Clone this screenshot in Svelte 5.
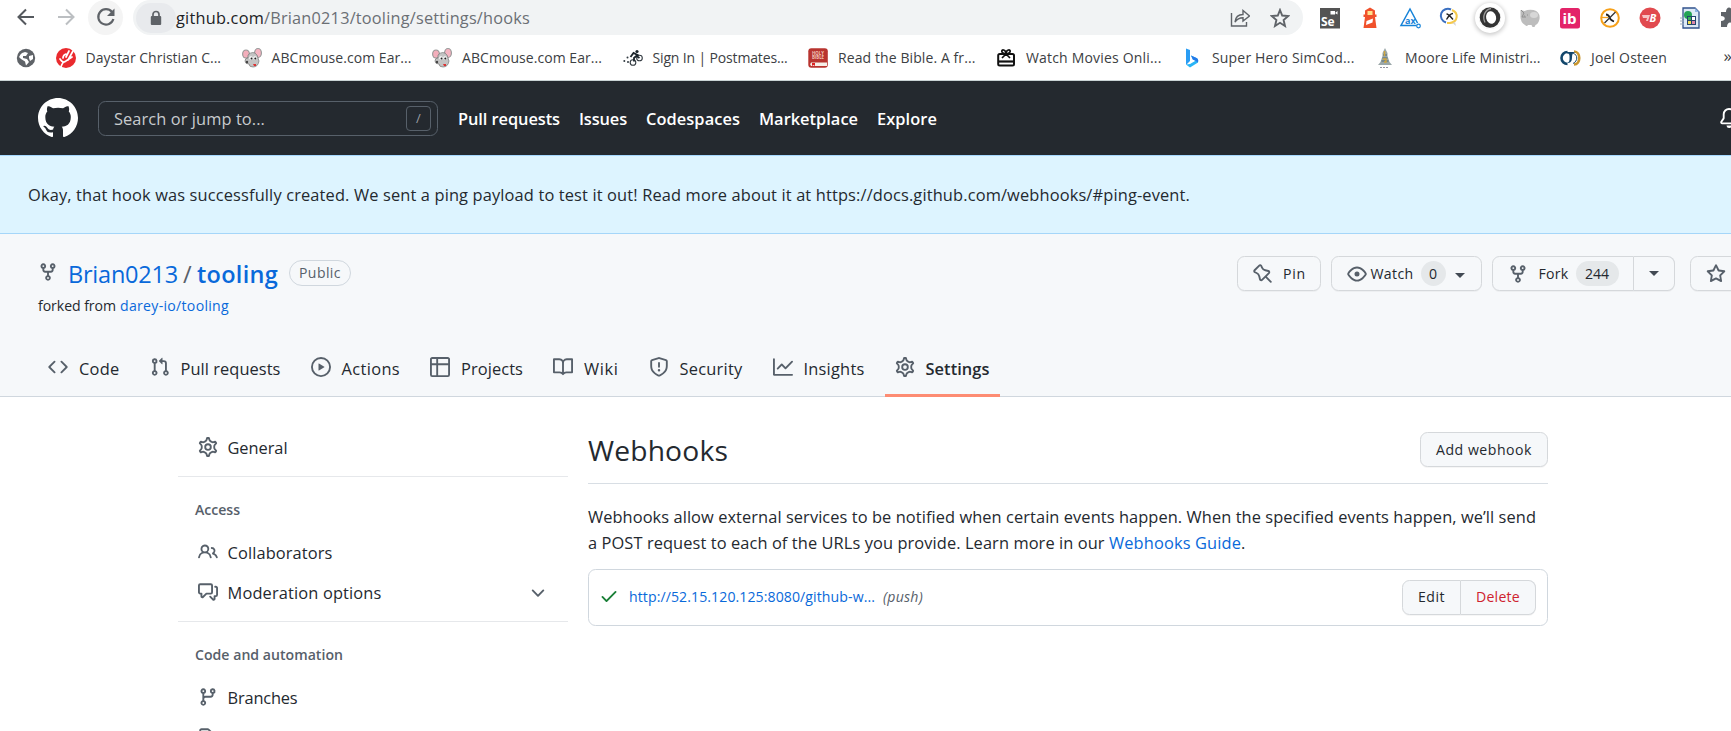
<script>
  // Spreads a label over its advance width through letter-spacing.
  function fit(node, width) {
    if (!width) return;
    const natural = node.getBoundingClientRect().width;
    node.style.letterSpacing = (width - natural) / node.textContent.length + 'px';
  }

  const icons = {
    mark: 'M8 0C3.58 0 0 3.58 0 8c0 3.54 2.29 6.53 5.47 7.59.4.07.55-.17.55-.38 0-.19-.01-.82-.01-1.49-2.01.37-2.53-.49-2.69-.94-.09-.23-.48-.94-.82-1.13-.28-.15-.68-.52-.01-.53.63-.01 1.08.58 1.23.82.72 1.21 1.87.87 2.33.66.07-.52.28-.87.51-1.07-1.78-.2-3.64-.89-3.64-3.95 0-.87.31-1.59.82-2.15-.08-.2-.36-1.02.08-2.12 0 0 .67-.21 2.2.82.64-.18 1.32-.27 2-.27.68 0 1.36.09 2 .27 1.53-1.04 2.2-.82 2.2-.82.44 1.1.16 1.92.08 2.12.51.56.82 1.27.82 2.15 0 3.07-1.87 3.75-3.65 3.95.29.25.54.73.54 1.48 0 1.07-.01 1.93-.01 2.2 0 .21.15.46.55.38A8.013 8.013 0 0016 8c0-4.42-3.58-8-8-8z',
    bell: 'M8 16a2 2 0 001.985-1.75c.017-.137-.097-.25-.235-.25h-3.5c-.138 0-.252.113-.235.25A2 2 0 008 16zM8 1.5A3.5 3.5 0 004.5 5v2.947c0 .346-.102.683-.294.97l-1.703 2.556a.018.018 0 00-.003.01l.001.006c0 .002.002.004.004.006a.017.017 0 00.006.004l.007.001h10.964l.007-.001a.016.016 0 00.006-.004.016.016 0 00.004-.006l.001-.007a.017.017 0 00-.003-.01l-1.703-2.554a1.75 1.75 0 01-.294-.97V5A3.5 3.5 0 008 1.5zM3 5a5 5 0 0110 0v2.947c0 .05.015.098.042.139l1.703 2.555A1.518 1.518 0 0113.482 13H2.518a1.518 1.518 0 01-1.263-2.36l1.703-2.554A.25.25 0 003 7.947V5z',
    fork: 'M5 3.25a.75.75 0 11-1.5 0 .75.75 0 011.5 0zm0 2.122a2.25 2.25 0 10-1.5 0v.878A2.25 2.25 0 005.75 8.5h1.5v2.128a2.251 2.251 0 101.5 0V8.5h1.5a2.25 2.25 0 002.25-2.25v-.878a2.25 2.25 0 10-1.5 0v.878a.75.75 0 01-.75.75h-4.5A.75.75 0 015 6.25v-.878zm3.75 7.378a.75.75 0 11-1.5 0 .75.75 0 011.5 0zm3-8.75a.75.75 0 100-1.5.75.75 0 000 1.5z',
    code: 'M4.72 3.22a.75.75 0 011.06 1.06L2.06 8l3.72 3.72a.75.75 0 11-1.06 1.06L.47 8.53a.75.75 0 010-1.06l4.25-4.25zm6.56 0a.75.75 0 10-1.06 1.06L13.94 8l-3.72 3.72a.75.75 0 101.06 1.06l4.25-4.25a.75.75 0 000-1.06l-4.25-4.25z',
    pull: 'M7.177 3.073L9.573.677A.25.25 0 0110 .854v4.792a.25.25 0 01-.427.177L7.177 3.427a.25.25 0 010-.354zM3.75 2.5a.75.75 0 100 1.5.75.75 0 000-1.5zm-2.25.75a2.25 2.25 0 113 2.122v5.256a2.251 2.251 0 11-1.5 0V5.372A2.25 2.25 0 011.5 3.25zM11 2.5h-1V4h1a1 1 0 011 1v5.628a2.251 2.251 0 101.5 0V5A2.5 2.5 0 0011 2.5zm1 10.25a.75.75 0 111.5 0 .75.75 0 01-1.5 0zM3.75 12a.75.75 0 100 1.5.75.75 0 000-1.5z',
    play: 'M1.5 8a6.5 6.5 0 1113 0 6.5 6.5 0 01-13 0zM8 0a8 8 0 100 16A8 8 0 008 0zM6.379 5.227A.25.25 0 006 5.442v5.117a.25.25 0 00.379.214l4.264-2.559a.25.25 0 000-.428L6.379 5.227z',
    table: 'M0 1.75C0 .784.784 0 1.75 0h12.5C15.216 0 16 .784 16 1.75v12.5A1.75 1.75 0 0114.25 16H1.75A1.75 1.75 0 010 14.25V1.75zM1.5 6.5v7.75c0 .138.112.25.25.25H5v-8H1.5zM5 5H1.5V1.75a.25.25 0 01.25-.25H5V5zm1.5 1.5v8h7.75a.25.25 0 00.25-.25V6.5h-8zm8-1.5h-8V1.5h7.75a.25.25 0 01.25.25V5z',
    book: 'M0 1.75A.75.75 0 01.75 1h4.253c1.227 0 2.317.59 3 1.501A3.744 3.744 0 0111.006 1h4.245a.75.75 0 01.75.75v10.5a.75.75 0 01-.75.75h-4.507a2.25 2.25 0 00-1.591.659l-.622.621a.75.75 0 01-1.06 0l-.622-.621A2.25 2.25 0 005.258 13H.75a.75.75 0 01-.75-.75V1.75zm8.755 3a2.25 2.25 0 012.25-2.25H14.5v9h-3.757c-.71 0-1.4.201-1.992.572l.004-7.322zm-1.504 7.324l.004-5.073-.002-2.253A2.25 2.25 0 005.003 2.5H1.5v9h3.757a3.75 3.75 0 011.994.574z',
    shield: 'M7.467.133a1.75 1.75 0 011.066 0l5.25 1.68A1.75 1.75 0 0115 3.48V7c0 1.566-.32 3.182-1.303 4.682-.983 1.498-2.585 2.813-5.032 3.855a1.7 1.7 0 01-1.33 0c-2.447-1.042-4.049-2.357-5.032-3.855C1.32 10.182 1 8.566 1 7V3.48a1.75 1.75 0 011.217-1.667l5.25-1.68zm.61 1.429a.25.25 0 00-.153 0l-5.25 1.68a.25.25 0 00-.174.238V7c0 1.358.275 2.666 1.057 3.86.784 1.194 2.121 2.34 4.366 3.297a.2.2 0 00.154 0c2.245-.956 3.582-2.104 4.366-3.298C13.225 9.666 13.5 8.36 13.5 7V3.48a.25.25 0 00-.174-.237l-5.25-1.68zM9 10.5a1 1 0 11-2 0 1 1 0 012 0zm-.25-5.75a.75.75 0 10-1.5 0v3a.75.75 0 001.5 0v-3z',
    graph: 'M1.5 1.75a.75.75 0 00-1.5 0v12.5c0 .414.336.75.75.75h14.5a.75.75 0 000-1.5H1.5V1.75zm14.28 2.53a.75.75 0 00-1.06-1.06L10 7.94 7.53 5.47a.75.75 0 00-1.06 0L3.22 8.72a.75.75 0 001.06 1.06L7 7.06l2.47 2.47a.75.75 0 001.06 0l5.25-5.25z',
    pin: 'M4.456.734a1.75 1.75 0 012.826.504l.613 1.327a3.081 3.081 0 002.084 1.707l2.454.584c1.332.317 1.8 1.972.832 2.94L11.06 10l3.72 3.72a.75.75 0 11-1.061 1.06L10 11.06l-2.204 2.205c-.968.968-2.623.5-2.94-.832l-.584-2.454a3.081 3.081 0 00-1.707-2.084l-1.327-.613a1.75 1.75 0 01-.504-2.826L4.456.734zM5.92 1.866a.25.25 0 00-.404-.072L1.794 5.516a.25.25 0 00.072.404l1.328.613A4.582 4.582 0 015.73 9.63l.584 2.454a.25.25 0 00.42.12l5.47-5.47a.25.25 0 00-.12-.42L9.63 5.73a4.581 4.581 0 01-3.098-2.537L5.92 1.866z',
    eye: 'M1.679 7.932c.412-.621 1.242-1.75 2.366-2.717C5.175 4.242 6.527 3.5 8 3.5c1.473 0 2.824.742 3.955 1.715 1.124.967 1.954 2.096 2.366 2.717a.119.119 0 010 .136c-.412.621-1.242 1.75-2.366 2.717C10.825 11.758 9.473 12.5 8 12.5c-1.473 0-2.824-.742-3.955-1.715C2.92 9.818 2.09 8.69 1.679 8.068a.119.119 0 010-.136zM8 2c-1.981 0-3.67.992-4.933 2.078C1.797 5.169.88 6.423.43 7.1a1.619 1.619 0 000 1.798c.45.678 1.367 1.932 2.637 3.024C4.329 13.008 6.019 14 8 14c1.981 0 3.67-.992 4.933-2.078 1.27-1.091 2.187-2.345 2.637-3.023a1.619 1.619 0 000-1.798c-.45-.678-1.367-1.932-2.637-3.023C11.671 2.992 9.981 2 8 2zm0 8a2 2 0 100-4 2 2 0 000 4z',
    star: 'M8 .25a.75.75 0 01.673.418l1.882 3.815 4.21.612a.75.75 0 01.416 1.279l-3.046 2.97.719 4.192a.75.75 0 01-1.088.791L8 12.347l-3.766 1.98a.75.75 0 01-1.088-.79l.72-4.194L.818 6.374a.75.75 0 01.416-1.28l4.21-.611L7.327.668A.75.75 0 018 .25zm0 2.445L6.615 5.5a.75.75 0 01-.564.41l-3.097.45 2.24 2.184a.75.75 0 01.216.664l-.528 3.084 2.769-1.456a.75.75 0 01.698 0l2.77 1.456-.53-3.084a.75.75 0 01.216-.664l2.24-2.183-3.096-.45a.75.75 0 01-.564-.41L8 2.694v.001z',
    people: 'M5.5 3.5a2 2 0 100 4 2 2 0 000-4zM2 5.5a3.5 3.5 0 115.898 2.549 5.507 5.507 0 013.034 4.084.75.75 0 11-1.482.235 4.001 4.001 0 00-7.9 0 .75.75 0 01-1.482-.236A5.507 5.507 0 013.102 8.05 3.49 3.49 0 012 5.5zM11 4a.75.75 0 100 1.5 1.5 1.5 0 01.666 2.844.75.75 0 00-.416.672v.352a.75.75 0 00.574.73c1.2.289 2.162 1.2 2.522 2.372a.75.75 0 101.434-.44 5.01 5.01 0 00-2.56-3.012A3 3 0 0011 4z',
    discussion: 'M1.5 2.75a.25.25 0 01.25-.25h8.5a.25.25 0 01.25.25v5.5a.25.25 0 01-.25.25h-3.5a.75.75 0 00-.53.22L3.5 11.44V9.25a.75.75 0 00-.75-.75h-1a.25.25 0 01-.25-.25v-5.5zM1.75 1A1.75 1.75 0 000 2.75v5.5C0 9.216.784 10 1.75 10H2v1.543a1.457 1.457 0 002.487 1.03L7.061 10h3.189A1.75 1.75 0 0012 8.25v-5.5A1.75 1.75 0 0010.25 1h-8.5zM14.5 4.75a.25.25 0 00-.25-.25h-.5a.75.75 0 110-1.5h.5c.966 0 1.75.784 1.75 1.75v5.5A1.75 1.75 0 0114.25 12H14v1.543a1.457 1.457 0 01-2.487 1.03L9.22 12.28a.75.75 0 111.06-1.06l2.22 2.22v-2.19a.75.75 0 01.75-.75h1a.25.25 0 00.25-.25v-5.5z',
    branch: 'M11.75 2.5a.75.75 0 100 1.5.75.75 0 000-1.5zm-2.25.75a2.25 2.25 0 113 2.122V6A2.5 2.5 0 0110 8.5H6a1 1 0 00-1 1v1.128a2.251 2.251 0 11-1.5 0V5.372a2.25 2.25 0 111.5 0v1.836A2.492 2.492 0 016 7h4a1 1 0 001-1v-.628A2.25 2.25 0 019.5 3.25zM4.25 12a.75.75 0 100 1.5.75.75 0 000-1.5zM3.5 3.25a.75.75 0 111.5 0 .75.75 0 01-1.5 0z',
    tag: 'M2.5 7.775V2.75a.25.25 0 01.25-.25h5.025a.25.25 0 01.177.073l6.25 6.25a.25.25 0 010 .354l-5.025 5.025a.25.25 0 01-.354 0l-6.25-6.25a.25.25 0 01-.073-.177zm-1.5 0V2.75C1 1.784 1.784 1 2.75 1h5.025c.464 0 .91.184 1.238.513l6.25 6.25a1.75 1.75 0 010 2.474l-5.026 5.026a1.75 1.75 0 01-2.474 0l-6.25-6.25A1.75 1.75 0 011 7.775z',
    chevron: 'M12.78 6.22a.75.75 0 010 1.06l-4.25 4.25a.75.75 0 01-1.06 0L3.22 7.28a.75.75 0 011.06-1.06L8 9.94l3.72-3.72a.75.75 0 011.06 0z',
    check: 'M13.78 4.22a.75.75 0 010 1.06l-7.25 7.25a.75.75 0 01-1.06 0L2.22 9.28a.75.75 0 011.06-1.06L6 10.94l6.72-6.72a.75.75 0 011.06 0z'
  };
  const gearPath = 'M7.429 1.525a6.593 6.593 0 011.142 0c.036.003.108.036.137.146l.289 1.105c.147.56.55.967.997 1.189.174.086.341.183.501.29.417.278.97.423 1.53.27l1.102-.303c.11-.03.175.016.195.046.219.31.41.641.573.989.014.031.022.11-.059.19l-.815.806c-.411.406-.562.957-.53 1.456a4.588 4.588 0 010 .582c-.032.499.119 1.05.53 1.456l.815.806c.08.08.073.159.059.19a6.494 6.494 0 01-.573.99c-.02.029-.086.074-.195.045l-1.103-.303c-.559-.153-1.112-.008-1.529.27-.16.107-.327.204-.5.29-.449.222-.851.628-.998 1.189l-.289 1.105c-.029.11-.101.143-.137.146a6.613 6.613 0 01-1.142 0c-.036-.003-.108-.037-.137-.146l-.289-1.105c-.147-.56-.55-.967-.997-1.189a4.502 4.502 0 01-.501-.29c-.417-.278-.97-.423-1.53-.27l-1.102.303c-.11.03-.175-.016-.195-.046a6.492 6.492 0 01-.573-.989c-.014-.031-.022-.11.059-.19l.815-.806c.411-.406.562-.957.53-1.456a4.587 4.587 0 010-.582c.032-.499-.119-1.05-.53-1.456l-.815-.806c-.08-.08-.073-.159-.059-.19a6.44 6.44 0 01.573-.99c.02-.029.086-.075.195-.045l1.103.303c.559.153 1.112.008 1.529-.27.16-.107.327-.204.5-.29.449-.222.851-.628.998-1.189l.289-1.105c.029-.11.101-.143.137-.146z';

  const bookmarks = [
    ['daystar', 'Daystar Christian C...', 135.5],
    ['mouse', 'ABCmouse.com Ear...', 140],
    ['mouse', 'ABCmouse.com Ear...', 140],
    ['bike', 'Sign In | Postmates...', 135],
    ['bible', 'Read the Bible. A fr...', 137.5],
    ['gift', 'Watch Movies Onli...', 135.5],
    ['bing', 'Super Hero SimCod...', 142.5],
    ['tower', 'Moore Life Ministri...', 135.5],
    ['joel', 'Joel Osteen', 76]
  ];
  const extensions = ['se', 'lighthouse', 'axe', 'lens', 'ring', 'pig', 'ib', 'xpath', 'bolt', 'sheet', 'puzzle'];
  const headerLinks = [['Pull requests', 102], ['Issues', 48], ['Codespaces', 94], ['Marketplace', 99], ['Explore', 60]];
  const tabs = [
    ['code', 'Code', 40.5], ['pull', 'Pull requests', 100], ['play', 'Actions', 58.5], ['table', 'Projects', 62],
    ['book', 'Wiki', 34.5], ['shield', 'Security', 63], ['graph', 'Insights', 61], ['gear', 'Settings', 64]
  ];
</script>

{#snippet icon(name, size = 20)}
  <svg class="oct" width={size} height={size} viewBox="0 0 16 16" aria-hidden="true">
    {#if name === 'gear'}
      <path d={gearPath} transform="translate(8 8) scale(1.11) translate(-8 -8)" fill="none" stroke="currentColor" stroke-width="1.35" />
      <circle cx="8" cy="8" r="2.25" fill="none" stroke="currentColor" stroke-width="1.5" />
    {:else}
      <path d={icons[name]} fill="currentColor" fill-rule="evenodd" />
    {/if}
  </svg>
{/snippet}

{#snippet favicon(name)}
  <svg class="oct" width="20" height="20" viewBox="0 0 20 20" aria-hidden="true">
    {#if name === 'daystar'}
      <circle cx="10" cy="10" r="10" fill="#ea2a2e" />
      <path d="M5 19c1-4 2-5 5-6l6-4M4 11c2 3 4 4 6 2M12 12l5-9M10 9l3-6M7 10q0-3 3-4" fill="none" stroke="#fff" stroke-width="1.7" stroke-linecap="round" />
    {:else if name === 'mouse'}
      <ellipse cx="4" cy="6" rx="4" ry="4.5" fill="#999" /><ellipse cx="4" cy="6" rx="2.8" ry="3.5" fill="#f3aebb" />
      <ellipse cx="16" cy="5" rx="4" ry="5" fill="#999" /><ellipse cx="16" cy="5" rx="2.8" ry="4" fill="#f6b5c2" />
      <path d="M6 7q5-5 9 0l2 6q-1 6-6 6-4 0-4-3-4 0-4-3 0-3 3-3z" fill="#c4c4c4" stroke="#777" stroke-width=".7" />
      <circle cx="9" cy="10" r="1.8" fill="#fff" /><circle cx="13" cy="10" r="1.8" fill="#fff" />
      <circle cx="9.5" cy="10.5" r="1" fill="#222" /><circle cx="13.3" cy="10.5" r="1" fill="#222" />
      <circle cx="5" cy="14" r="1.2" fill="#444" /><path d="M11 16h3v2h-2z" fill="#d33" />
    {:else if name === 'bike'}
      <circle cx="10" cy="14.5" r="2.800" fill="none" stroke="#333b42" stroke-width="1.1" />
      <circle cx="16.500" cy="10" r="2.800" fill="none" stroke="#333b42" stroke-width="1.1" />
      <path d="M7.500 9l3-4 4 2-3.500 3 0 3.500M13.500 8l3 2" fill="none" stroke="#1b242b" stroke-width="1.800" />
      <circle cx="14" cy="3.500" r="1.600" fill="#1b242b" />
      <circle cx="1.300" cy="13" r="1" fill="#333b42" /><circle cx="4.500" cy="9.500" r="1" fill="#333b42" /><circle cx="5" cy="14" r="1" fill="#333b42" />
    {:else if name === 'bible'}
      <rect x=".3" y=".3" width="19.500" height="19.400" rx="3" fill="#b8342f" />
      <path d="M3 14.500h16v3.500H3q-1.800-1.700 0-3.500z" fill="#f6efe8" /><path d="M4 15h3v3l-1.500-1L4 18z" fill="#d22" />
      <text x="10" y="6.800" font-size="4.300" font-weight="700" text-anchor="middle" fill="#f0c4b8">HOLY</text>
      <text x="10" y="11.300" font-size="4.300" font-weight="700" text-anchor="middle" fill="#f0c4b8">BIBLE</text>
    {:else if name === 'gift'}
      <rect x="2.200" y="6" width="15.800" height="11.600" rx="1.500" fill="none" stroke="#111" stroke-width="2" />
      <path d="M2 13.500h16" stroke="#111" stroke-width="2.200" />
      <path d="M10 6L6 10M10 6l4 4M9.500 5.500C5 6 5 1.500 7.500 2S10 5 10 6c0-1 0-3.500 2.500-4s2.500 4-2 3.500" fill="none" stroke="#111" stroke-width="1.700" />
    {:else if name === 'bing'}
      <path d="M4 .5l4 1.500v11L4 17z" fill="#2a9df4" /><path d="M4 16.500l4 3 8-5q1-3-1.500-4.500L9 7.500l1.800 4 2.700 1.300L8 16z" fill="#29b5f6" />
      <path d="M9 7.500l5.500 2.500q2.500 1.500 1.300 4.500l-2.300-1.700-2.700-1.300z" fill="#2479e8" />
    {:else if name === 'tower'}
      <path d="M10 0l2.500 5v3l2 6 2.500 3H3l2.500-3 2-6V5z" fill="#9aa7a8" />
      <path d="M8 7h4M7.500 10h5M6.500 13h7" stroke="#536b74" /><path d="M9.500 3v5M8 11h3v3H9" stroke="#d1a63c" fill="none" stroke-width="1.400" />
      <path d="M5 19.500h9" stroke="#667" stroke-width=".7" stroke-dasharray="2 1" />
    {:else if name === 'joel'}
      <path d="M6.500 4A6 6 0 006.500 16" fill="none" stroke="#12466b" stroke-width="2.600" />
      <path d="M13 3.500c7 0 7 13 0 13" fill="none" stroke="#c8952c" stroke-width="2.600" />
      <path d="M6 4h9c-3 .5-4 2-4 5 0 4-1 6-5 6 3-1 2.500-4 2.500-7 0-2-1-2.500-2.500-2.500z" fill="#12466b" />
      <path d="M12 5c5 2 5 8 0 10.500" fill="none" stroke="#12466b" stroke-width="1" />
    {/if}
  </svg>
{/snippet}

{#snippet extension(name)}
  <svg class="oct ext-{name}" width="22" height="22" viewBox="0 0 22 22" aria-hidden="true">
    {#if name === 'se'}
      <rect x="1" y="1" width="20" height="20.500" fill="#545454" /><path d="M11.500 4h4.500v3.500h-4.500zM16 6l2.500-2v3.500z" fill="#fff" />
      <text x="2" y="19" font-size="12" font-weight="700" fill="#fff">Se</text>
    {:else if name === 'lighthouse'}
      <path d="M11 .5l5 3v4h1.500v2.500H16L17.500 21h-13L6 10H4.500V7.500H6v-4z" fill="#f0512b" /><rect x="8.500" y="4" width="5" height="4" fill="#ffe08a" />
      <path d="M7.500 14l6.500-2.500-.5 4-6.500 2.500z" fill="#fff" />
    {:else if name === 'axe'}
      <path d="M17.500 18.500H2L11 2l7.500 14" fill="none" stroke="#1683d8" stroke-width="1.500" /><circle cx="19.500" cy="19" r="1.800" fill="#fff" stroke="#1683d8" stroke-width="1.200" />
      <text x="6" y="17" font-size="9" font-weight="700" fill="#1683d8">ax</text>
    {:else if name === 'lens'}
      <path d="M12 2.500A7 7 0 107 15.500" fill="none" stroke="#3a6fc0" stroke-width="2" /><path d="M13 3c7 3 6 12-2 13h-3" fill="none" stroke="#f5c94c" stroke-width="2" />
      <path d="M13.500 16l3.500 3-1-4z" fill="#d5d5d5" />
      <path d="M7.500 7q2 0 6.500 5.500M14 6.500q-3 0-6.500 6" fill="none" stroke="#222" stroke-width="1.400" />
    {:else if name === 'ring'}
      <circle cx="11" cy="10.500" r="10.300" fill="#333" /><ellipse cx="12" cy="10.500" rx="5" ry="6.300" fill="#fff" transform="rotate(-12 12 10)" />
      <path d="M12 1.500c-6 1-9 8-6 14" fill="none" stroke="#999" stroke-width="1.300" />
    {:else if name === 'pig'}
      <path d="M1.500 3l4 1q4-2 9-1 7 2 6 9-1 5-4 6l-1 2h-2l-1-2H9q-1 2-3 0Q1 15 1.500 9z" fill="#bdbdbd" /><path d="M2 3l3 3-2 4 4 0M5 9h1M8 8h1" stroke="#909090" fill="none" />
      <ellipse cx="15" cy="8" rx="4" ry="3" fill="#d7d7d7" />
    {:else if name === 'ib'}
      <rect x="1" y="1" width="20" height="20.500" rx="2.500" fill="#e32469" /><text x="3.500" y="17" font-size="15" font-weight="700" fill="#fff">ib</text>
    {:else if name === 'xpath'}
      <circle cx="11" cy="11" r="8.800" fill="#fff" stroke="#f7a11a" stroke-width="2" /><path d="M7 7.500q2.500 0 3.500 3t4.500 4" fill="none" stroke="#222" stroke-width="1.800" /><path d="M16.500 5L5.500 16" stroke="#333" stroke-width="1.300" /><path d="M3 10.500h6" stroke="#f7a11a" stroke-width="1.300" />
    {:else if name === 'bolt'}
      <circle cx="11" cy="11" r="10.500" fill="#e14a4f" /><path d="M3 8h8l-2 6H7l1-3H4z" fill="#f6c4c4" /><text x="10.500" y="15" font-size="11" font-weight="700" font-style="italic" fill="#fff">B</text>
    {:else if name === 'sheet'}
      <path d="M4 1h12l4 4v16H4z" fill="#dce9f6" stroke="#30518c" stroke-width="1.300" /><path d="M16 1v4h4" fill="#8db4e2" />
      <circle cx="9" cy="8" r="4" fill="#23a455" /><rect x="8" y="9" width="9" height="9" fill="#23446e" /><path d="M9 10h3v3H9z" fill="#3cb45c" /><path d="M13 10h3v3h-3z" fill="#fff" /><path d="M9 14h3v3H9z" fill="#eedd55" /><path d="M13 14h3v3h-3z" fill="#dd88aa" />
      <path d="M1 11h4M1 14h4M1 17h4" stroke="#9ab" />
    {:else}
      <path d="M2 5h5c0-6 6-6 6 0h7v15h-6c0-6-6-6-6 0H2v-6c5 0 5-5 0-5z" fill="#5f6368" />
    {/if}
  </svg>
{/snippet}

<div class="screen">
  <div class="toolbar">
    <svg width="20" height="20" viewBox="0 0 20 20"><path d="M18 10H3M10 2.500L2.500 10l7.500 7.500" fill="none" stroke="#55595e" stroke-width="2" /></svg>
    <svg width="20" height="20" viewBox="0 0 20 20"><path d="M2 10h15M10 2.500l7.500 7.500-7.500 7.500" fill="none" stroke="#bcbfc2" stroke-width="2" /></svg>
    <div class="reload"><svg width="20" height="20" viewBox="0 0 20 20"><path d="M16 5A7.700 7.700 0 1017.400 12" fill="none" stroke="#5f6368" stroke-width="2.200" /><path d="M18.500 1.500v7.500H11z" fill="#5f6368" /></svg></div>
    <div class="omnibox">
      <div class="lock"><svg width="12" height="16" viewBox="0 0 12 16"><path d="M3 7V4.500a3 3 0 016 0V7" fill="none" stroke="#5f6368" stroke-width="1.700" /><rect x=".8" y="6" width="10.400" height="9" rx="1" fill="#5f6368" /></svg></div>
      <span class="t url dark" use:fit={88}>github.com</span><span class="t url" use:fit={266}>/Brian0213/tooling/settings/hooks</span>
      <div class="actions">
        <svg width="20" height="20" viewBox="0 0 20 20"><path d="M1.500 5v13h15v-4" fill="none" stroke="#5f6368" stroke-width="1.400" /><path d="M5 14c.5-5 3-7.500 8-7.500V2.500L19.500 8 13 13V9.800C9.500 9.800 7 11 5 14z" fill="none" stroke="#5f6368" stroke-width="1.400" /></svg>
        <svg width="20" height="20" viewBox="0 0 20 20"><path d="M10 2l2.200 5.500 6 .5-4.600 4 1.400 6L10 14.800 5 18l1.400-6L1.800 8l6-.5z" fill="none" stroke="#5f6368" stroke-width="1.900" /></svg>
      </div>
    </div>
    <div class="extensions">
      {#each extensions as e}<div class="extension" class:raised={e === 'ring'}>{@render extension(e)}</div>{/each}
    </div>
  </div>

  <div class="bookmarks">
    <svg class="globe" width="20" height="20" viewBox="0 0 20 20"><circle cx="10" cy="10" r="9.200" fill="#5f6368" /><path d="M3 9c2-3 2-4 6-5l3 1-2 3H7v2l4 1 2 3-3 3.500-1-4L5 11zM13 8l4-1v4l-3 2-1-3z" fill="#fff" /></svg>
    {#each bookmarks as [name, label, width]}
      <div class="bookmark">{@render favicon(name)}<span class="t" use:fit={width}>{label}</span></div>
    {/each}
    <span class="more">»</span>
  </div>

  <header>
    {@render icon('mark', 40)}
    <div class="search"><span class="t" use:fit={151}>Search or jump to...</span><span class="slash">/</span></div>
    <nav>{#each headerLinks as [label, width]}<span class="t" use:fit={width}>{label}</span>{/each}</nav>
    <div class="bell">{@render icon('bell')}</div>
  </header>

  <div class="flash"><span class="t" use:fit={1162}>Okay, that hook was successfully created. We sent a ping payload to test it out! Read more about it at https://docs.github.com/webhooks/#ping-event.</span></div>

  <section class="repo">
    <div class="title-row">
      <div class="title">
        {@render icon('fork')}
        <span class="t name" use:fit={110}>Brian0213</span><span class="t sep">/</span><span class="t name bold" use:fit={81}>tooling</span>
        <span class="pill"><span class="t" use:fit={42}>Public</span></span>
      </div>
      <div class="btn pin">{@render icon('pin')}<span class="t" use:fit={23}>Pin</span></div>
      <div class="btn watch">{@render icon('eye')}<span class="t" use:fit={43}>Watch</span><span class="count">0</span><i class="caret"></i></div>
      <div class="group">
        <div class="btn forkbtn">{@render icon('fork')}<span class="t" use:fit={30}>Fork</span><span class="count">244</span></div>
        <div class="btn drop"><i class="caret"></i></div>
      </div>
      <div class="btn starbtn">{@render icon('star')}</div>
    </div>
    <div class="forked"><span class="t" use:fit={78}>forked from</span><span class="t link" use:fit={109}>darey-io/tooling</span></div>
    <div class="tabs">
      {#each tabs as [name, label, width]}
        <div class="tab" class:active={label === 'Settings'}>{@render icon(name)}<span class="t" use:fit={width}>{label}</span></div>
      {/each}
    </div>
  </section>

  <main>
    <aside>
      <div class="item first">{@render icon('gear')}<span class="t" use:fit={60}>General</span></div>
      <hr />
      <h3><span class="t" use:fit={45}>Access</span></h3>
      <div class="item">{@render icon('people')}<span class="t" use:fit={105}>Collaborators</span></div>
      <div class="item">{@render icon('discussion')}<span class="t" use:fit={154}>Moderation options</span><span class="chev">{@render icon('chevron')}</span></div>
      <hr />
      <h3><span class="t" use:fit={148}>Code and automation</span></h3>
      <div class="item">{@render icon('branch')}<span class="t" use:fit={70}>Branches</span></div>
      <div class="item">{@render icon('tag')}</div>
    </aside>
    <div class="content">
      <div class="head"><h2><span class="t" use:fit={140}>Webhooks</span></h2><div class="btn add"><span class="t" use:fit={96}>Add webhook</span></div></div>
      <p>
        <span class="t" use:fit={948}>Webhooks allow external services to be notified when certain events happen. When the specified events happen, we’ll send</span>
        <span class="line"><span class="t" use:fit={521}>a POST request to each of the URLs you provide. Learn more in our&nbsp;</span><span class="t link" use:fit={132}>Webhooks Guide</span><span class="t">.</span></span>
      </p>
      <div class="hook">
        <span class="ok">{@render icon('check')}</span>
        <span class="t link" use:fit={246}>http://52.15.120.125:8080/github-w...</span><span class="t event" use:fit={40}>(push)</span>
        <div class="group end"><div class="btn edit"><span class="t" use:fit={27}>Edit</span></div><div class="btn delete"><span class="t" use:fit={44}>Delete</span></div></div>
      </div>
    </div>
  </main>
</div>

<style>
  :global(body) { margin: 0; overflow: hidden; background: #fff; }
  .screen { width: 1731px; height: 731px; overflow: hidden; background: #fff; color: #24292f; font: 16.4px/26px 'Open Sans', 'Noto Sans', sans-serif; }
  .t { display: inline-block; white-space: pre; flex: none; }
  svg { display: block; flex: none; }
  .oct { overflow: visible; }
  .link { color: #0969da; }

  .toolbar { height: 35px; display: flex; align-items: center; padding-left: 16px; }
  .toolbar > svg { margin: 0 20px 2px 0; }
  .reload { width: 35px; height: 35px; flex: none; margin: 0 10px 0 -8px; border-radius: 50%; background: #f4f4f4; display: grid; place-items: center; }
  .reload svg { margin-bottom: 2px; }
  .omnibox { width: 1170px; height: 35px; flex: none; border-radius: 18px; background: #f1f3f4; display: flex; align-items: center; box-sizing: border-box; padding-left: 3px; }
  .lock { width: 40px; height: 30px; flex: none; border-radius: 15px; background: #e8eaed; display: grid; place-items: center; }
  .url { color: #6b6f74; font-size: 16.3px; }
  .dark { color: #202124; }
  .actions { display: flex; gap: 20px; margin: 0 13px 0 auto; }
  .extensions { display: flex; flex: none; margin-left: 7px; }
  .extension { width: 40px; height: 35px; flex: none; display: grid; place-items: center; }
  .raised svg { border-radius: 50%; outline: 4px solid #fff; box-shadow: 0 1px 4px 5px #ccc; }
  .extension text { font-family: 'Open Sans', sans-serif; }

  .bookmarks { height: 45px; border-bottom: 1px solid #c9d3d5; display: flex; align-items: center; gap: 20.5px; padding-left: 15.500px; font-size: 14px; color: #3c4043; }
  .globe { margin-right: -.5px; }
  .bookmark { display: flex; align-items: center; gap: 10px; }
  .bookmark .t { padding-top: 1px; }
  .bookmark text { font-family: 'Open Sans', sans-serif; }
  .more { margin-left: 36px; font-size: 17px; padding-bottom: 3px; }

  header { height: 74px; background: #24292f; color: #fff; display: flex; align-items: center; padding-left: 38px; }
  .search { width: 340px; height: 35px; flex: none; margin: 0 20px; padding: 0 6px 0 15px; box-sizing: border-box; border: 1px solid #57606a; border-radius: 7.5px; display: flex; align-items: center; justify-content: space-between; color: #c8cbce; }
  .search .t { padding-top: 2px; }
  .slash { width: 23px; height: 23px; border: 1px solid #57606a; border-radius: 4px; text-align: center; font-size: 13px; line-height: 23px; color: #9a9fa5; }
  nav { display: flex; flex: none; gap: 19px; font-weight: 600; padding-top: 1px; }
  .bell { margin-left: 782px; }

  .flash { height: 76px; padding: 1px 0 0 28px; background: #ddf4ff; border-top: 1px solid #a5d8ff; border-bottom: 1px solid #a5d6f9; display: flex; align-items: center; }

  .repo { height: 162px; background: #f6f8fa; border-bottom: 1px solid #d0d7de; }
  .repo .oct { color: #57606a; }
  .title-row { display: flex; padding: 22px 0 0 38px; height: 37px; }
  .title { width: 1199px; flex: none; display: flex; }
  .title > .oct { margin-top: 6px; }
  .name { font-size: 23.500px; line-height: 36px; margin-left: 10px; color: #0969da; }
  .sep { width: 10px; margin-left: 5px; font-size: 23.500px; line-height: 36px; color: #57606a; }
  .name.bold { font-weight: 600; margin-left: 4px; }
  .pill { height: 24px; margin: 4px 0 0 11px; padding: 0 9px; border: 1px solid #d0d7de; border-radius: 13px; font-size: 14px; line-height: 23px; font-weight: 500; color: #57606a; }
  .btn { height: 35px; box-sizing: border-box; flex: none; display: flex; align-items: center; border: 1px solid #d5d8db; border-radius: 7.5px; background: #f6f8fa; box-shadow: 0 1px 0 rgba(27, 31, 36, .04); font-size: 14.100px; font-weight: 500; white-space: nowrap; }
  .pin { width: 83.500px; padding-left: 15px; gap: 10px; }
  .watch { width: 151px; margin-left: 10px; padding-left: 15px; gap: 4px; }
  .count { height: 25px; min-width: 25px; box-sizing: border-box; margin-left: 3px; padding: 0 8px; border-radius: 13px; background: #e5e8ea; text-align: center; line-height: 25px; }
  .caret { width: 0; height: 0; border: 5px solid transparent; border-top-color: #424a53; border-bottom: 0; }
  .watch .caret { margin: 3px 0 0 5px; }
  .group { display: flex; margin-left: 10px; }
  .group .btn:first-child { border-radius: 7.5px 0 0 7.5px; }
  .group .btn:last-child { border-radius: 0 7.5px 7.5px 0; border-left: 0; }
  .forkbtn { width: 142px; padding-left: 15px; gap: 11px; }
  .forkbtn .count { width: 43px; padding: 0; margin-left: -4px; }
  .drop { width: 41px; justify-content: center; }
  .starbtn { width: 100px; margin-left: 15px; padding-left: 15px; }
  .forked { display: flex; gap: 4px; padding: 0 0 0 38px; height: 26px; font-size: 14.100px; }
  .tabs { display: flex; gap: 10px; margin-left: 38px; }
  .tab { height: 60px; margin-top: 18px; padding: 0 10px; box-sizing: border-box; display: flex; align-items: center; gap: 11px; }
  .tab .t { padding-top: 3px; }
  .tab .oct { margin-bottom: 1px; }
  .tab.active { font-weight: 600; border-bottom: 3px solid #fd8c73; padding-top: 3px; }

  main { display: flex; padding-left: 178px; }
  aside { width: 390px; margin-right: 20px; flex: none; }
  .item { height: 40px; display: flex; align-items: center; gap: 9.500px; padding: 0 20px; color: #24292f; }
  .item .t { padding-top: 2px; }
  .item .oct { color: #57606a; }
  .first { margin-top: 30px; }
  .chev { margin-left: auto; }
  hr { height: 1px; margin: 9px 0 0; border: 0; background: #e6e8eb; }
  h3 { margin: 20px 0 9px 17px; font-size: 14.100px; font-weight: 600; line-height: 26px; color: #57606a; }
  .content { width: 960px; flex: none; }
  .head { height: 86px; border-bottom: 1px solid #d8dee4; display: flex; align-items: center; justify-content: space-between; }
  h2 { margin: 20px 0 0; font-size: 28.200px; line-height: 40px; font-weight: 400; }
  .add { margin-top: 19px; padding: 0 15px; }
  p { margin: 20px 0 0; display: flex; flex-direction: column; align-items: flex-start; line-height: 26.250px; }
  .line { display: flex; }
  .hook { height: 57px; box-sizing: border-box; margin-top: 12px; padding: 0 11px 0 10px; border: 1px solid #d0d7de; border-radius: 7.5px; display: flex; align-items: center; font-size: 14.100px; }
  .hook > .t { padding-bottom: 1px; }
  .ok { color: #1a7f37; margin: 0 10px 2px 0; }
  .event { margin-left: 8px; font-style: italic; color: #57606a; }
  .end { margin-left: auto; }
  .edit { width: 59px; justify-content: center; }
  .delete { width: 75px; justify-content: center; color: #cf222e; }
</style>
